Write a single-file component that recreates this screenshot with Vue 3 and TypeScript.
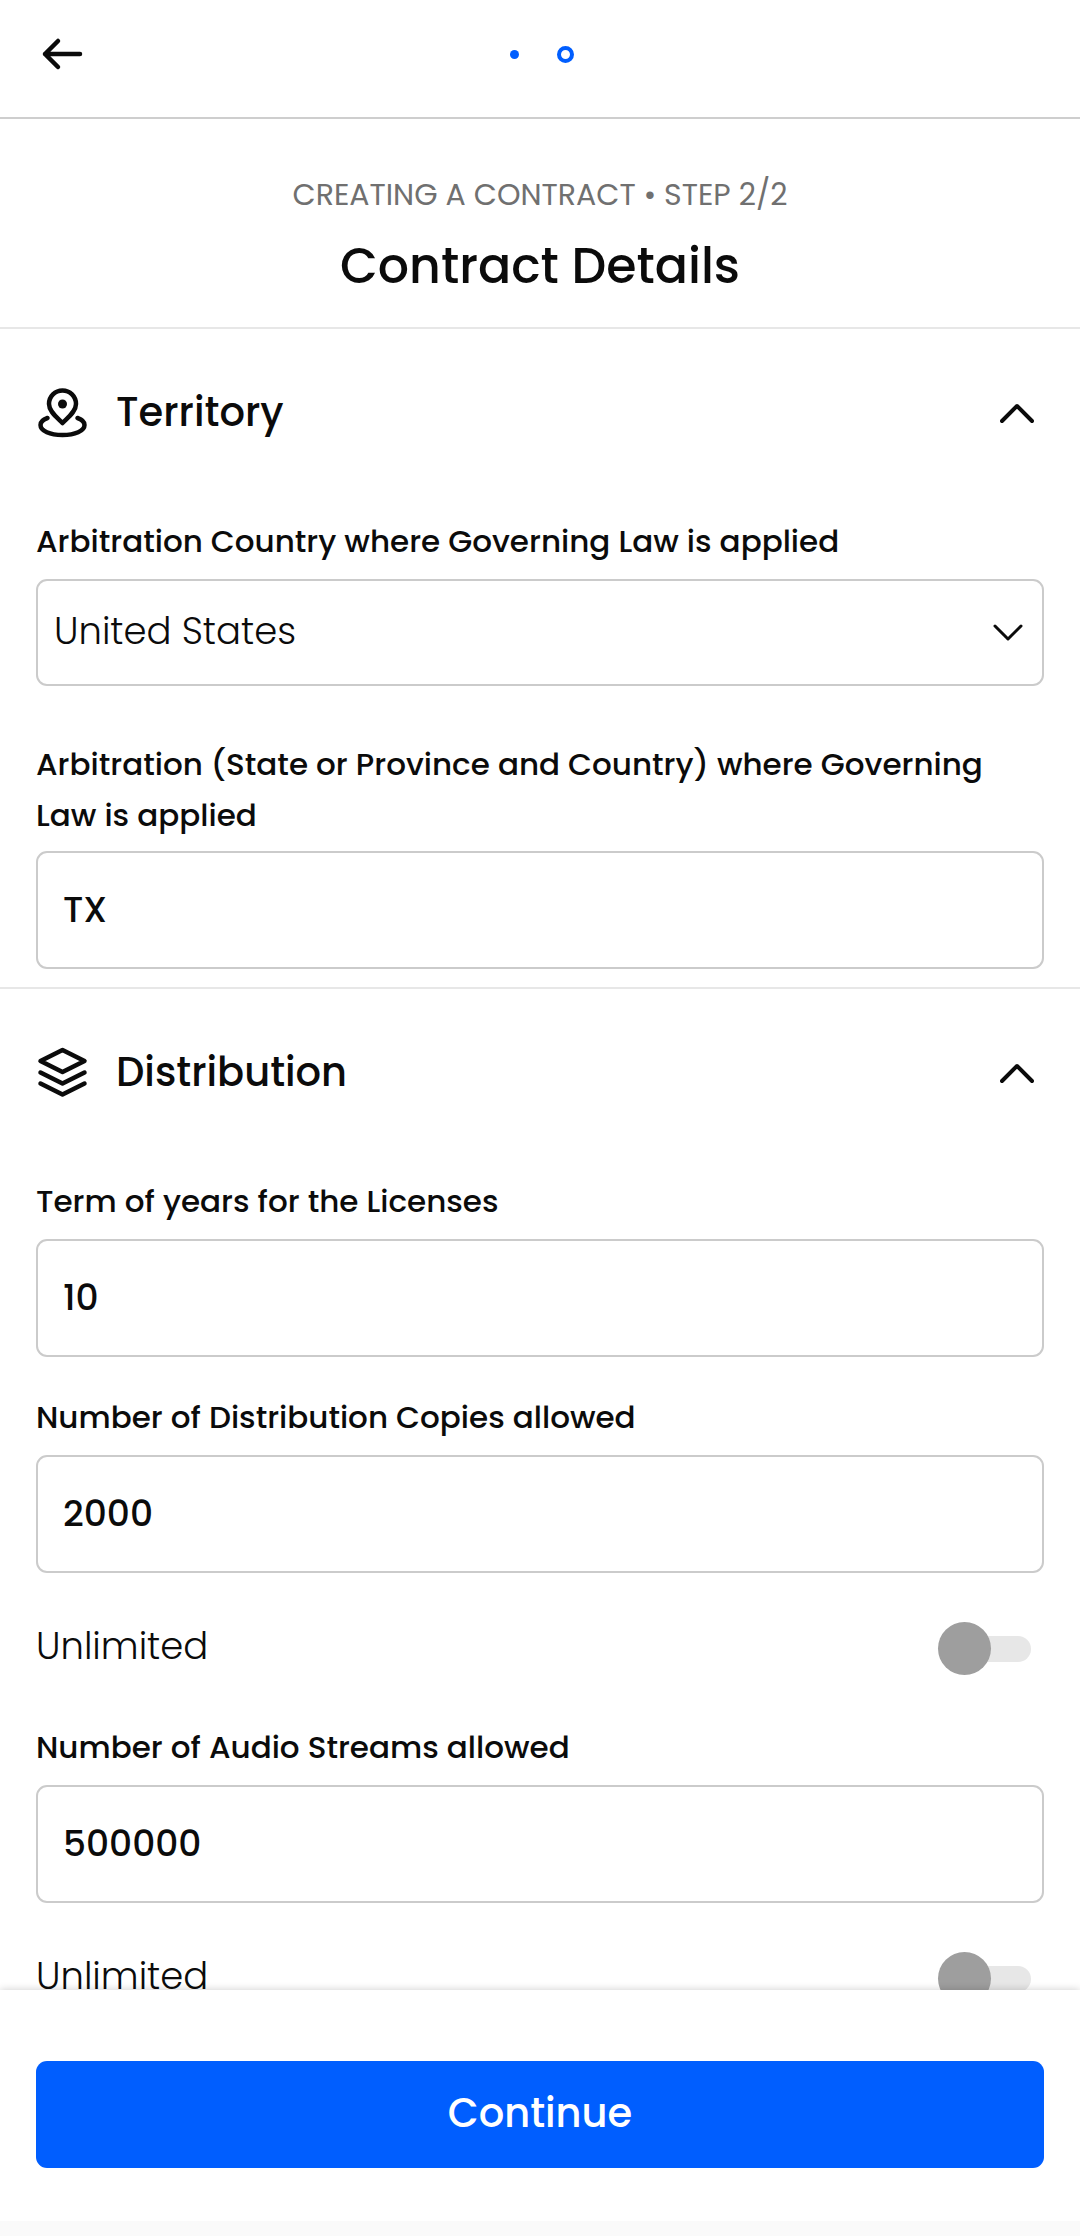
<script setup lang="ts">
import { ref } from 'vue'

interface LimitField {
  id: string
  label: string
  value: string
  unlimited?: boolean
}

const steps = 2
const currentStep = ref(2)
const territoryOpen = ref(true)
const distributionOpen = ref(true)

const countries: string[] = ['United States', 'Canada', 'United Kingdom']
const country = ref('United States')
const region = ref('TX')

const limits = ref<LimitField[]>([
  { id: 'term', label: 'Term of years for the Licenses', value: '10' },
  { id: 'copies', label: 'Number of Distribution Copies allowed', value: '2000', unlimited: false },
  { id: 'streams', label: 'Number of Audio Streams allowed', value: '500000', unlimited: false },
])
</script>

<template>
  <div class="app">
    <header class="topbar">
      <button class="icon-button" type="button" aria-label="Back">
        <svg width="52" height="52" viewBox="0 0 52 52" fill="none" stroke="currentColor" stroke-width="4.500" stroke-linecap="round" stroke-linejoin="round">
          <path d="M44 26H9M22 13L9 26l13 13" />
        </svg>
      </button>
      <div class="dots" role="img" :aria-label="`Step ${currentStep} of ${steps}`">
        <span v-for="n in steps" :key="n" class="dot-cell">
          <span class="dot" :class="{ current: n === currentStep }"></span>
        </span>
      </div>
    </header>

    <main class="content">
      <div class="heading">
        <p class="overline">CREATING A CONTRACT • STEP 2/2</p>
        <h1>Contract Details</h1>
      </div>

      <section class="section">
        <h2>
          <button class="section-toggle" type="button" :aria-expanded="territoryOpen" @click="territoryOpen = !territoryOpen">
            <svg class="section-icon" width="52" height="52" viewBox="0 0 52 52" fill="none" stroke="currentColor" stroke-width="4.500" stroke-linecap="round" stroke-linejoin="round">
              <path d="M26.500 37C22 32 13 26 13 18a13.500 13.500 0 0 1 27 0C40 26 31 32 26.500 37Z" />
              <circle cx="26.500" cy="18" r="4.500" fill="currentColor" stroke="none" />
              <path d="M11.500 32C7 33.500 4.500 36 4.500 39c0 6 9.500 10 22 10s22-4 22-10c0-3-2.500-5.500-7-7" />
            </svg>
            <span class="section-title">Territory</span>
            <svg class="chevron" :class="{ closed: !territoryOpen }" width="34" height="24" viewBox="0 0 34 24" fill="none" stroke="currentColor" stroke-width="4" stroke-linecap="round" stroke-linejoin="round">
              <path d="M2 21L17 6l15 15" />
            </svg>
          </button>
        </h2>
        <div v-if="territoryOpen" class="section-body">
          <div class="field">
            <label for="country">Arbitration Country where Governing Law is applied</label>
            <div class="select-wrap">
              <select id="country" v-model="country">
                <option v-for="c in countries" :key="c">{{ c }}</option>
              </select>
              <svg class="select-arrow" width="30" height="20" viewBox="0 0 30 20" fill="none" stroke="currentColor" stroke-width="3" stroke-linecap="round" stroke-linejoin="round">
                <path d="M2 3l13 13L28 3" />
              </svg>
            </div>
          </div>
          <div class="field spaced">
            <label for="region">Arbitration (State or Province and Country) where Governing Law is applied</label>
            <input id="region" v-model="region" class="text-input" type="text" />
          </div>
        </div>
      </section>

      <section class="section">
        <h2>
          <button class="section-toggle" type="button" :aria-expanded="distributionOpen" @click="distributionOpen = !distributionOpen">
            <svg class="section-icon" width="52" height="52" viewBox="0 0 52 52" fill="none" stroke="currentColor" stroke-width="4.500" stroke-linecap="round" stroke-linejoin="round">
              <path d="M26.500 4L48.500 15 26.500 26 4.500 15Z" />
              <path d="M4.500 26.500l22 11 22-11" />
              <path d="M4.500 37.500l22 11 22-11" />
            </svg>
            <span class="section-title">Distribution</span>
            <svg class="chevron" :class="{ closed: !distributionOpen }" width="34" height="24" viewBox="0 0 34 24" fill="none" stroke="currentColor" stroke-width="4" stroke-linecap="round" stroke-linejoin="round">
              <path d="M2 21L17 6l15 15" />
            </svg>
          </button>
        </h2>
        <div v-if="distributionOpen" class="section-body">
          <template v-for="f in limits" :key="f.id">
            <div class="field">
              <label :for="f.id">{{ f.label }}</label>
              <input :id="f.id" v-model="f.value" class="text-input" type="text" inputmode="numeric" />
            </div>
            <div v-if="f.unlimited !== undefined" class="switch-row">
              <label :for="`${f.id}-unlimited`">Unlimited</label>
              <input :id="`${f.id}-unlimited`" v-model="f.unlimited" class="switch" type="checkbox" role="switch" />
            </div>
          </template>
        </div>
      </section>
    </main>

    <footer class="actions">
      <button class="primary" type="button">Continue</button>
    </footer>
    <div class="inset"></div>
  </div>
</template>

<style>
body {
  margin: 0;
  background: #fff;
}
</style>

<style scoped>
* {
  box-sizing: border-box;
}

.app {
  display: flex;
  flex-direction: column;
  height: 100vh;
  color: #0b0b0b;
  background: #fff;
  font-family: Poppins, Inter, sans-serif;
}

button,
input,
select {
  font: inherit;
  color: inherit;
}

.topbar {
  display: grid;
  grid-template-columns: 52px 1fr 52px;
  align-items: center;
  flex: none;
  padding: 28px 36px 37px;
  border-bottom: 2px solid #cecece;
}

.icon-button {
  display: flex;
  padding: 0;
  border: 0;
  background: none;
}

.dots {
  display: flex;
  justify-content: center;
  gap: 34px;
}

.dot-cell {
  display: flex;
  align-items: center;
  justify-content: center;
  width: 17px;
  height: 17px;
}

.dot {
  width: 9px;
  height: 9px;
  border-radius: 50%;
  background: #005eff;
}

.dot.current {
  width: 17px;
  height: 17px;
  border: 4px solid #005eff;
  background: #fff;
}

.content {
  flex: 1;
  min-height: 0;
  overflow-y: auto;
  scrollbar-width: none;
}

.heading {
  padding: 55px 36px 23px;
  text-align: center;
}

.overline {
  margin: 0;
  font-size: 30px;
  line-height: 42px;
  color: #707070;
}

h1 {
  margin: 12px 0 0;
  font-size: 49px;
  line-height: 76px;
  font-weight: 500;
}

.section {
  border-top: 2px solid #e7e7e7;
}

h2 {
  margin: 0;
  font-size: 40px;
  line-height: 64px;
  font-weight: 500;
}

.section-toggle {
  display: flex;
  align-items: center;
  width: 100%;
  padding: 51px 46px 53px 36px;
  border: 0;
  background: none;
  line-height: 64px;
  text-align: left;
}

.section-icon {
  flex: none;
  margin-right: 28px;
}

.section-title {
  flex: 1;
}

.chevron {
  flex: none;
}

.chevron.closed {
  transform: rotate(180deg);
}

.section-body {
  padding: 19px 36px 18px;
}

.field {
  display: flex;
  flex-direction: column;
  gap: 12px;
  margin-bottom: 35px;
}

.field.spaced {
  gap: 10px;
  margin-top: 53px;
}

.field:last-child {
  margin-bottom: 0;
}

.field label {
  font-size: 31px;
  line-height: 51px;
  font-weight: 500;
}

.text-input,
select {
  width: 100%;
  border: 2px solid #cbcbcb;
  border-radius: 11px;
  background: #fff;
  font-size: 36px;
}

.text-input {
  height: 118px;
  padding: 0 25px 2px;
  font-weight: 500;
}

.select-wrap {
  display: grid;
  align-items: center;
}

.select-wrap > * {
  grid-area: 1 / 1;
}

select {
  height: 107px;
  padding: 0 60px 4px 16px;
  font-size: 37px;
  font-weight: 300;
  appearance: none;
}

.select-arrow {
  justify-self: end;
  margin-right: 21px;
  pointer-events: none;
}

.switch-row {
  display: flex;
  align-items: center;
  justify-content: space-between;
  margin: 49px 13px 47px 0;
}

.switch-row label {
  padding-bottom: 4px;
  font-size: 37px;
  font-weight: 300;
  line-height: 49px;
}

.switch {
  display: grid;
  align-items: center;
  width: 93px;
  height: 53px;
  margin: 0;
  appearance: none;
}

.switch::before,
.switch::after {
  content: '';
  grid-area: 1 / 1;
}

.switch::before {
  height: 26px;
  margin-left: 7px;
  border-radius: 13px;
  background: #e7e7e7;
}

.switch::after {
  width: 53px;
  height: 53px;
  border-radius: 50%;
  background: #9e9e9e;
}

.switch:checked::after {
  justify-self: end;
  background: #005eff;
}

.actions {
  position: relative;
  flex: none;
  padding: 71px 36px 53px;
  background: #fff;
  box-shadow: 0 0 8px rgba(0, 0, 0, 0.2);
}

.primary {
  display: block;
  width: 100%;
  height: 107px;
  padding: 0 0 4px;
  border: 0;
  border-radius: 11px;
  background: #005eff;
  color: #fff;
  font-size: 40px;
  font-weight: 500;
}

.inset {
  position: relative;
  flex: none;
  height: 15px;
  background: #fafafa;
}
</style>
